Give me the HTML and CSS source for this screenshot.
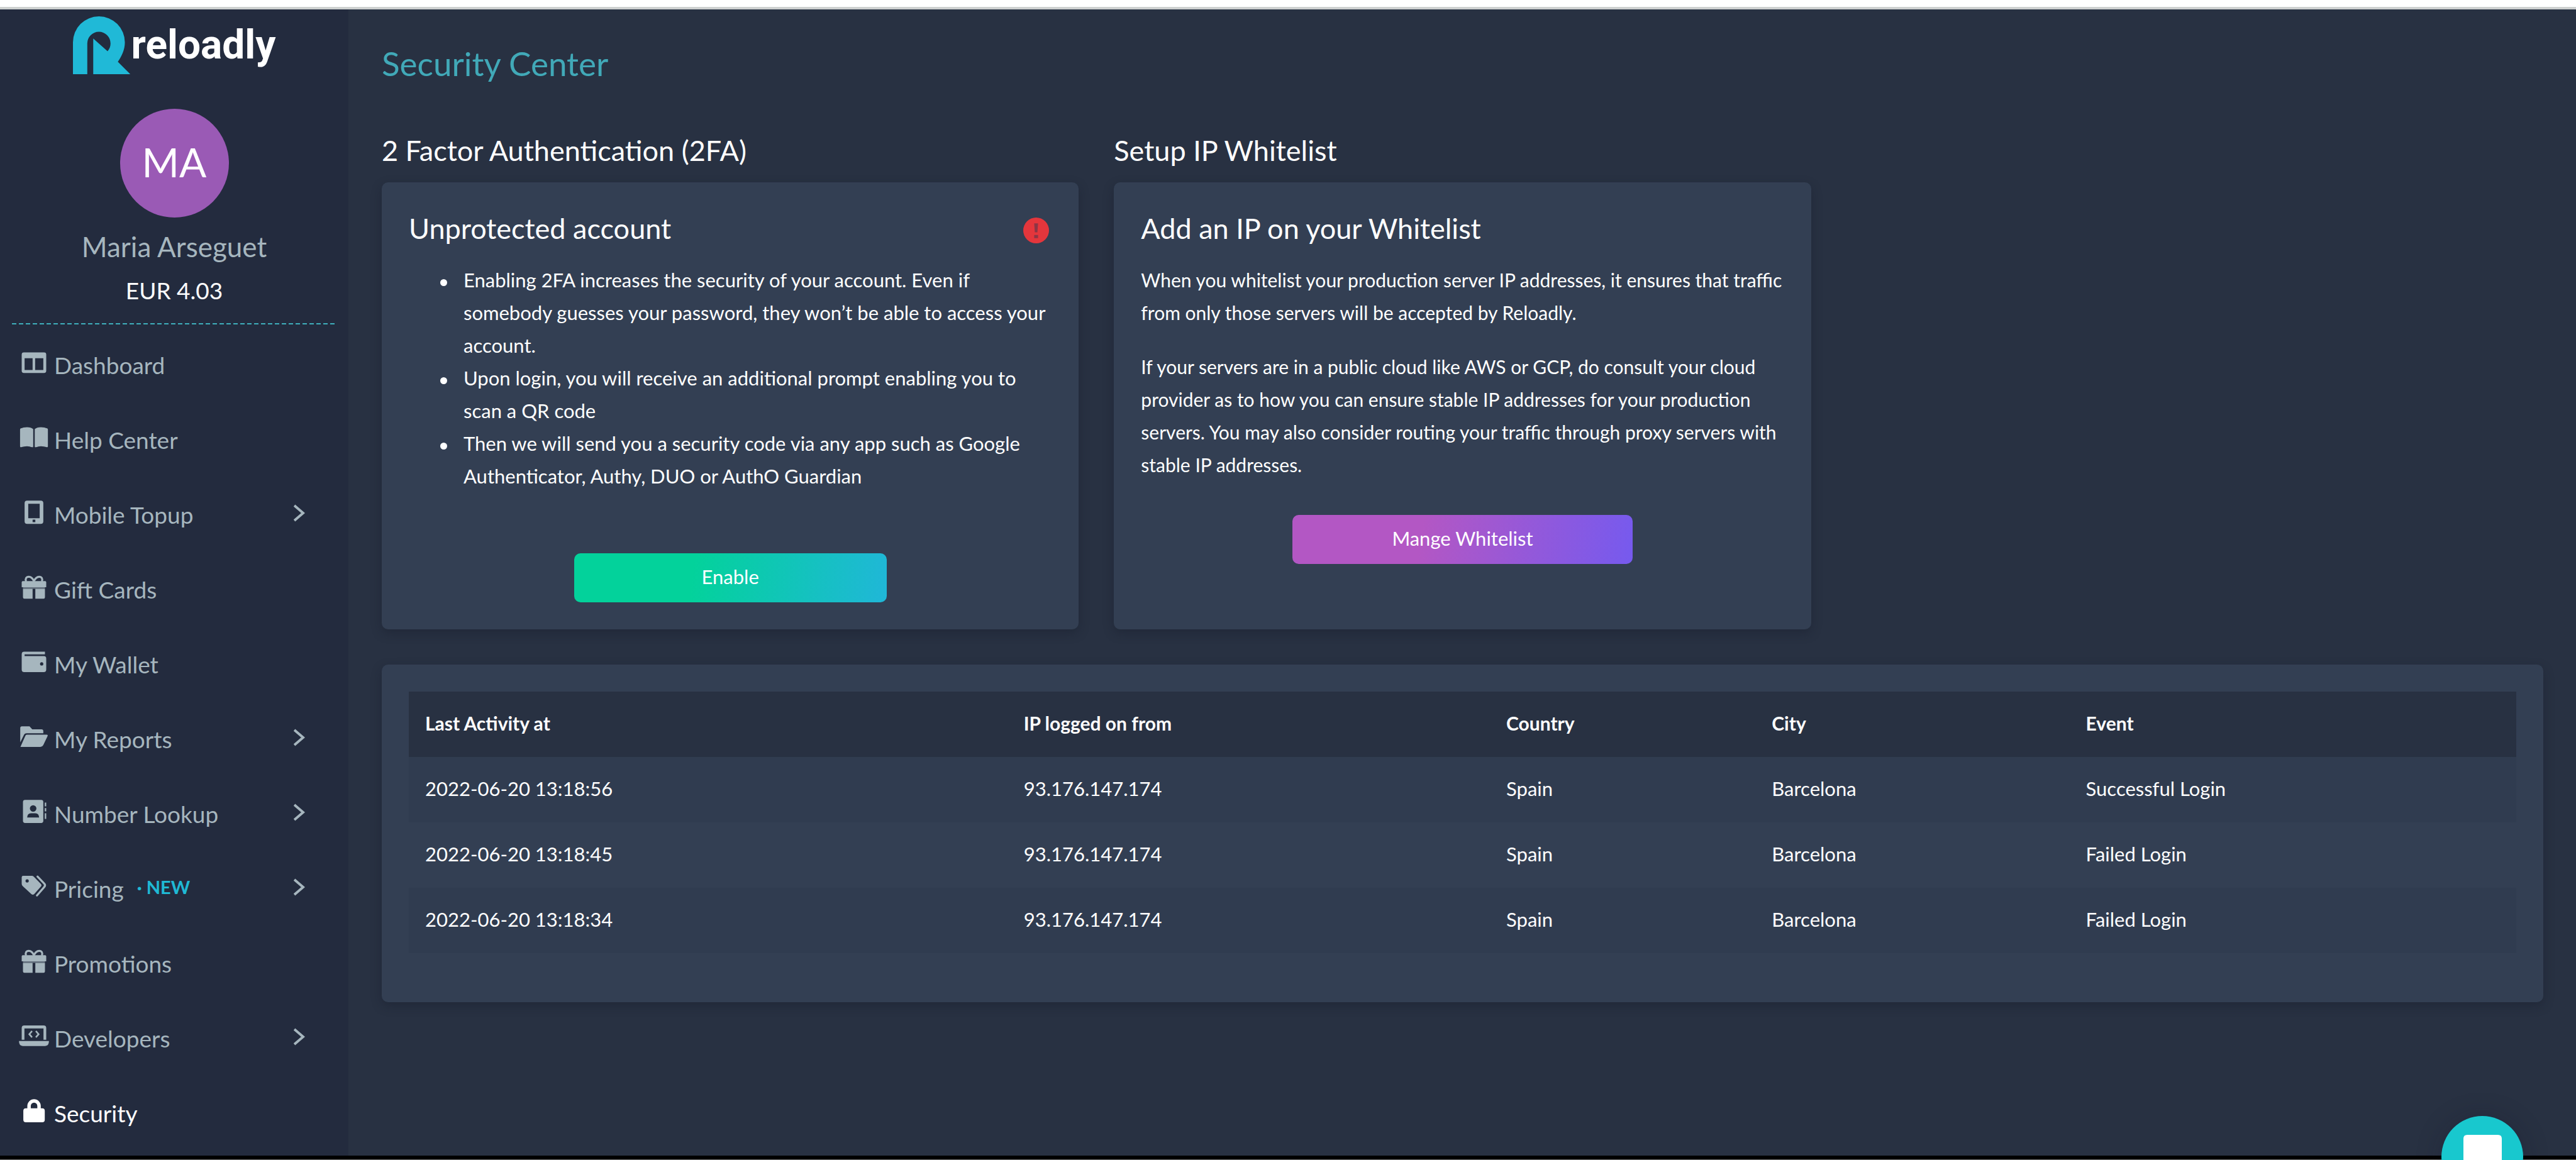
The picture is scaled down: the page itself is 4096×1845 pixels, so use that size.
FILE: index.html
```html
<!DOCTYPE html>
<html lang="en">
<head>
<meta charset="utf-8">
<title>Reloadly - Security Center</title>
<link rel="stylesheet" href="styles.css">
</head>
<body>
<svg class="sprite" aria-hidden="true">
  <symbol id="i-dashboard" viewBox="0 0 165 135"><path fill-rule="evenodd" d="M27 9H138Q150 9 150 21V110Q150 122 138 122H27Q15 122 15 110V21Q15 9 27 9ZM31 41V106H75V41ZM89 41V106H134V41Z"/></symbol>
  <symbol id="i-book" viewBox="0 0 165 135"><path transform="translate(6 1) scale(.266 .25)" d="M249.600 471.500c10.800 3.800 22.400-4.100 22.400-15.500V78.600c0-4.200-1.600-8.400-5-11C247.400 52 202.400 32 144 32C93.500 32 46.300 45.300 18.100 56.100C6.800 60.500 0 71.700 0 83.800V454.100c0 11.900 12.800 20.200 24.100 16.500C55.600 460.100 105.500 448 144 448c33.900 0 79 14 105.600 23.500zm76.800 0C353 462 398.100 448 432 448c38.500 0 88.400 12.100 119.900 22.600c11.300 3.800 24.100-4.600 24.100-16.500V83.800c0-12.100-6.800-23.300-18.100-27.600C529.700 45.300 482.500 32 432 32c-58.400 0-103.400 20-123 35.600c-3.300 2.600-5 6.800-5 11V456c0 11.400 11.700 19.300 22.400 15.500z"/></symbol>
  <symbol id="i-mobile" viewBox="0 0 165 135"><path fill-rule="evenodd" d="M45 1H120Q134 1 134 15V115Q134 129 120 129H45Q31 129 31 115V15Q31 1 45 1ZM51 18V98H114V18ZM75 106V119H90V106Z"/></symbol>
  <symbol id="i-gift" viewBox="0 0 165 135"><path d="M15 38Q15 32 21 32H144Q150 32 150 38V66H15ZM22 74H75V129H30Q22 129 22 121ZM90 74H143V121Q143 129 135 129H90Z"/><path opacity=".5" d="M22 66H143V74H22Z"/><path fill="none" stroke="currentColor" stroke-width="11" d="M39 34C33 20 40 8 54 8C68 8 76 18 82 32C89 18 97 8 111 8C125 8 132 20 126 34"/></symbol>
  <symbol id="i-wallet" viewBox="0 0 165 135"><path fill-rule="evenodd" d="M29 9H143V23H31V33H137Q150 33 150 46V107Q150 121 136 121H29Q15 121 15 107V23Q15 9 29 9ZM116 76A9 9 0 1 0 134 76A9 9 0 1 0 116 76Z"/></symbol>
  <symbol id="i-folder" viewBox="0 0 165 135"><path d="M7 17Q7 8 16 8H58L73 24H124Q134 24 134 34V46H42Q32 46 28 54L7 96Z"/><path d="M44 54H152Q161 54 157 62L134 111Q129 121 118 121H8L34 62Q37 54 44 54Z"/></symbol>
  <symbol id="i-contact" viewBox="0 0 165 135"><path fill-rule="evenodd" d="M34 1H122Q134 1 134 13V116Q134 128 122 128H34Q22 128 22 116V13Q22 1 34 1ZM60 48A18 18 0 1 0 96 48A18 18 0 1 0 60 48ZM45 98H111Q110 74 90 74H66Q46 74 45 98Z"/><path d="M142 16H150V36H142ZM142 46H150V64H142ZM142 74H150V106H142Z"/></symbol>
  <symbol id="i-tags" viewBox="0 0 165 135"><path fill-rule="evenodd" d="M23 7H70Q77 7 82 12L120 51Q128 59 120 67L84 107Q76 115 68 107L21 64Q15 58 15 51V15Q15 7 23 7ZM36 35A9 9 0 1 0 54 35A9 9 0 1 0 36 35Z"/><path fill="none" stroke="currentColor" stroke-width="11" stroke-linecap="round" d="M102 11L139 50Q148 59 139 69L99 115"/></symbol>
  <symbol id="i-laptop" viewBox="0 0 165 135"><path fill-rule="evenodd" d="M29 7H136Q150 7 150 21V86H135V23H30V86H15V21Q15 7 29 7ZM0 93H165Q165 120 144 120H21Q0 120 0 93Z"/><path fill="none" stroke="currentColor" stroke-width="9" d="M72 38L57 55L72 72M93 38L108 55L93 72"/></symbol>
  <symbol id="i-lock" viewBox="0 0 165 135"><path fill-rule="evenodd" d="M46 51V38A37 37 0 0 1 120 38V51H128Q142 51 142 65V114Q142 128 128 128H38Q24 128 24 114V65Q24 51 38 51ZM65 51H101V38A18 18 0 0 0 65 38Z"/></symbol>
  <symbol id="i-chevron" viewBox="0 0 18 28"><path fill="none" stroke="currentColor" stroke-width="4" d="M1 2L15 14L1 26"/></symbol>
</svg>

<div class="page">
  <div class="browser-edge"></div>
  <div class="app">
    <aside class="sidebar">
      <a class="logo" href="#">
        <svg class="logo-mark" viewBox="0 0 107 107" aria-hidden="true"><path d="M0 107V48A48 48 0 0 1 96 48C96 62 90 74 83 84L106 107H37.500V41L64 64.500C68 60 69.500 55 69.500 50A21.500 21.500 0 0 0 26.500 50V107Z"/></svg>
        <span class="logo-word">reloadly</span>
      </a>
      <div class="profile">
        <div class="avatar">MA</div>
        <div class="name">Maria Arseguet</div>
        <div class="balance">EUR 4.03</div>
      </div>
      <nav class="nav">
        <a class="nav-item" href="#"><svg class="icon"><use href="#i-dashboard"/></svg><span class="label">Dashboard</span></a>
        <a class="nav-item" href="#"><svg class="icon"><use href="#i-book"/></svg><span class="label">Help Center</span></a>
        <a class="nav-item" href="#"><svg class="icon"><use href="#i-mobile"/></svg><span class="label">Mobile Topup</span><svg class="chevron"><use href="#i-chevron"/></svg></a>
        <a class="nav-item" href="#"><svg class="icon"><use href="#i-gift"/></svg><span class="label">Gift Cards</span></a>
        <a class="nav-item" href="#"><svg class="icon"><use href="#i-wallet"/></svg><span class="label">My Wallet</span></a>
        <a class="nav-item" href="#"><svg class="icon"><use href="#i-folder"/></svg><span class="label">My Reports</span><svg class="chevron"><use href="#i-chevron"/></svg></a>
        <a class="nav-item" href="#"><svg class="icon"><use href="#i-contact"/></svg><span class="label">Number Lookup</span><svg class="chevron"><use href="#i-chevron"/></svg></a>
        <a class="nav-item" href="#"><svg class="icon"><use href="#i-tags"/></svg><span class="label">Pricing</span><span class="new">· NEW</span><svg class="chevron"><use href="#i-chevron"/></svg></a>
        <a class="nav-item" href="#"><svg class="icon"><use href="#i-gift"/></svg><span class="label">Promotions</span></a>
        <a class="nav-item" href="#"><svg class="icon"><use href="#i-laptop"/></svg><span class="label">Developers</span><svg class="chevron"><use href="#i-chevron"/></svg></a>
        <a class="nav-item active" href="#"><svg class="icon"><use href="#i-lock"/></svg><span class="label">Security</span></a>
      </nav>
    </aside>

    <main class="main">
      <h1 class="page-title">Security Center</h1>
      <div class="columns">
        <section class="column">
          <h2 class="heading">2 Factor Authentication (2FA)</h2>
          <div class="card">
            <div class="card-head">
              <h3 class="heading">Unprotected account</h3>
              <svg class="alert" viewBox="0 0 40 40" role="img" aria-label="Warning"><circle cx="20" cy="20" r="20" fill="#e4363c"/><path fill="#8c3545" d="M17 9h6l-1 14h-4zM17 27h6v5h-6z"/></svg>
            </div>
            <ul class="points">
              <li>Enabling 2FA increases the security of your account. Even if<br>somebody guesses your password, they won’t be able to access your<br>account.</li>
              <li>Upon login, you will receive an additional prompt enabling you to<br>scan a QR code</li>
              <li>Then we will send you a security code via any app such as Google<br>Authenticator, Authy, DUO or AuthO Guardian</li>
            </ul>
            <button class="button enable" type="button">Enable</button>
          </div>
        </section>
        <section class="column">
          <h2 class="heading">Setup IP Whitelist</h2>
          <div class="card">
            <div class="card-head">
              <h3 class="heading">Add an IP on your Whitelist</h3>
            </div>
            <p>When you whitelist your production server IP addresses, it ensures that traffic<br>from only those servers will be accepted by Reloadly.</p>
            <p>If your servers are in a public cloud like AWS or GCP, do consult your cloud<br>provider as to how you can ensure stable IP addresses for your production<br>servers. You may also consider routing your traffic through proxy servers with<br>stable IP addresses.</p>
            <button class="button whitelist" type="button">Mange Whitelist</button>
          </div>
        </section>
      </div>

      <div class="card log-card">
        <table class="log">
          <colgroup><col class="c-time"><col class="c-ip"><col class="c-country"><col class="c-city"><col></colgroup>
          <thead>
            <tr><th>Last Activity at</th><th>IP logged on from</th><th>Country</th><th>City</th><th>Event</th></tr>
          </thead>
          <tbody>
            <tr><td>2022-06-20 13:18:56</td><td>93.176.147.174</td><td>Spain</td><td>Barcelona</td><td>Successful Login</td></tr>
            <tr><td>2022-06-20 13:18:45</td><td>93.176.147.174</td><td>Spain</td><td>Barcelona</td><td>Failed Login</td></tr>
            <tr><td>2022-06-20 13:18:34</td><td>93.176.147.174</td><td>Spain</td><td>Barcelona</td><td>Failed Login</td></tr>
          </tbody>
        </table>
      </div>
    </main>
  </div>
  <div class="bottom-edge"></div>
</div>

<button class="chat" type="button" aria-label="Open chat"><svg class="chat-icon" viewBox="0 0 61 70" aria-hidden="true"><path d="M6 0H55Q61 0 61 6V70L46 61H6Q0 61 0 55V6Q0 0 6 0Z"/></svg></button>
</body>
</html>
```
FILE: styles.css
```css
* {
  box-sizing: border-box;
}

body {
  margin: 0;
  background: #283142;
  color: #fff;
  font-family: Lato, "Liberation Sans", sans-serif;
  font-size: 31px;
  line-height: 52px;
}

h1, h2, h3, p, ul {
  margin: 0;
  font-weight: 400;
}

button {
  font: inherit;
  color: inherit;
  border: 0;
  cursor: pointer;
}

a {
  color: inherit;
  text-decoration: none;
}

.sprite {
  display: none;
}

.page {
  display: flex;
  flex-direction: column;
  min-height: 100vh;
}

.browser-edge {
  height: 15px;
  background: #fff;
  border-bottom: 4px solid #cdd0cf;
}

.bottom-edge {
  height: 7px;
  background: #000;
  border-bottom: 1px solid #777;
}

.app {
  display: flex;
  flex: 1;
}

/* Sidebar */

.sidebar {
  flex: none;
  width: 554px;
  padding-top: 10px;
  background: #232b3e;
  color: #a6b6be;
}

.logo {
  display: flex;
  justify-content: center;
  align-items: center;
  gap: 1px;
  height: 93px;
}

.logo-mark {
  width: 92px;
  height: 92px;
  fill: #20b9d7;
}

.logo-word {
  color: #fff;
  font-family: Roboto, Lato, sans-serif;
  font-size: 64px;
  font-weight: 700;
  line-height: 92px;
}

.profile {
  display: flex;
  flex-direction: column;
  align-items: center;
  margin: 55px 19px 2px;
  padding-bottom: 28px;
  background: repeating-linear-gradient(90deg, #3fafbc 0 7px, transparent 7px 11px) bottom / 100% 2px no-repeat;
}

.avatar {
  width: 173px;
  height: 173px;
  border-radius: 50%;
  background: #9a5ab5;
  color: #fff;
  font-size: 64px;
  line-height: 170px;
  text-align: center;
}

.name {
  margin-top: 18px;
  font-size: 44px;
  line-height: 56px;
}

.balance {
  margin-top: 16px;
  color: #fff;
  font-size: 37px;
}

.nav {
  display: flex;
  flex-direction: column;
}

.nav-item {
  display: flex;
  align-items: center;
  gap: 8px;
  height: 119px;
  padding: 0 69px 0 30px;
  font-size: 37px;
}

.nav-item.active {
  color: #fff;
}

.icon {
  width: 48px;
  height: 39px;
  fill: currentColor;
}

.label {
  padding-top: 6px;
}

.new {
  margin-left: 13px;
  color: #1fb9d4;
  font-size: 29px;
  font-weight: 700;
}

.chevron {
  width: 18px;
  height: 28px;
  margin-left: auto;
}

/* Content */

.main {
  flex: 1;
  padding: 54px 52px 54px 53px;
}

.page-title {
  color: #41a9b8;
  font-size: 53px;
  line-height: 64px;
}

.heading {
  font-size: 45px;
  line-height: 60px;
}

.columns {
  display: grid;
  grid-template-columns: repeat(3, 1fr);
  gap: 56px;
  margin: 76px 0 56px;
}

.column {
  display: flex;
  flex-direction: column;
  gap: 21px;
}

.card {
  display: flex;
  flex: 1;
  flex-direction: column;
  padding: 43px;
  border-radius: 10px;
  background: #333f53;
  box-shadow: 0 6px 16px rgba(20, 26, 40, .35);
  white-space: nowrap;
}

.card-head {
  display: flex;
  justify-content: space-between;
  align-items: center;
  margin-bottom: 26px;
}

.alert {
  width: 41px;
  height: 41px;
  margin: 7px 4px 0 0;
}

.points {
  padding-left: 87px;
  margin-bottom: 97px;
  list-style: none;
}

.points li::before {
  content: "";
  display: inline-block;
  width: 11px;
  height: 11px;
  margin: 0 26px 0 -37px;
  border-radius: 50%;
  background: currentColor;
  vertical-align: middle;
}

.card p {
  margin-bottom: 34px;
  font-size: 30px;
}

.button {
  align-self: center;
  height: 78px;
  padding: 0 0 4px;
  border-radius: 10px;
}

.enable {
  width: 497px;
  background: linear-gradient(98deg, #03d29b 38%, #20b7d8);
}

.whitelist {
  width: 541px;
  margin-top: 20px;
  background: linear-gradient(98deg, #b357c4 38%, #765aee);
}

.log-card {
  padding-bottom: 78px;
}

.log {
  width: 100%;
  table-layout: fixed;
  border-collapse: collapse;
}

.log th,
.log td {
  height: 104px;
  padding: 0 26px 4px;
  text-align: left;
}

.log th {
  font-size: 30px;
}

.log thead tr {
  background: #283142;
}

.log tbody tr:nth-child(odd) {
  background: #303c50;
}

.c-time {
  width: 28.4%;
}

.c-ip {
  width: 22.9%;
}

.c-country {
  width: 12.6%;
}

.c-city {
  width: 14.9%;
}

/* Chat launcher */

.chat {
  position: fixed;
  right: 84px;
  bottom: -60px;
  display: flex;
  justify-content: center;
  width: 130px;
  height: 130px;
  padding: 30px 0 0;
  border-radius: 50%;
  background: #18c8ce;
  box-shadow: 0 3px 40px rgba(20, 20, 40, .25);
}

.chat-icon {
  width: 61px;
  height: 70px;
  fill: #fff;
}
```
